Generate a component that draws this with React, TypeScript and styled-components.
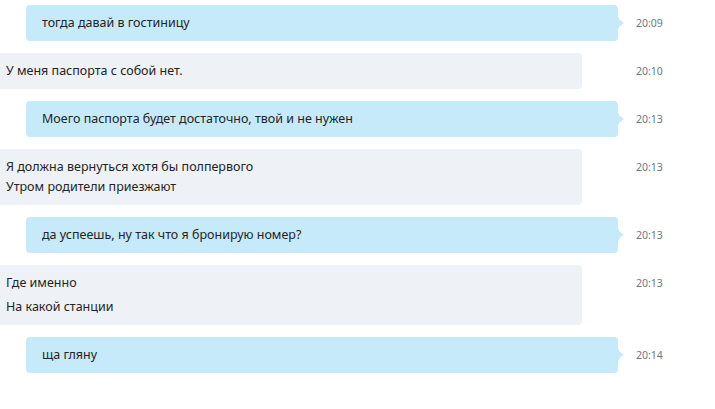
import React from "react";
import styled, { createGlobalStyle } from "styled-components";

const Global = createGlobalStyle`
  html, body { margin: 0; padding: 0; background: #ffffff; }
  body { font-family: "Noto Sans", "Open Sans", sans-serif; }
`;

const List = styled.div`
  display: flex;
  flex-direction: column;
  gap: 12px;
  padding-top: 5px;
  width: 715px;
`;

const Row = styled.div`
  display: grid;
  grid-template-columns: 636px auto;
  align-items: start;
`;

const Bubble = styled.div<{ $out?: boolean }>`
  position: relative;
  box-sizing: border-box;
  margin-left: ${(p) => (p.$out ? "26px" : "0")};
  margin-right: ${(p) => (p.$out ? "18px" : "54px")};
  padding: 8px ${(p) => (p.$out ? "16px" : "6px")};
  background: ${(p) => (p.$out ? "#c7eafb" : "#eef2f7")};
  border-radius: ${(p) => (p.$out ? "4px" : "0 4px 4px 0")};
  color: #242424;
  font-size: 12.5px;
  line-height: 20px;
  white-space: nowrap;
`;

const Para = styled.p`
  margin: 0;
  & + & { margin-top: 4px; }
`;

const Tail = styled.svg`
  position: absolute;
  right: -6px;
  top: 8px;
  width: 7px;
  height: 20px;
`;

const Time = styled.div`
  font-size: 10.5px;
  line-height: 20px;
  padding-top: 8px;
  color: #6b7785;
`;

type Msg = { out: boolean; time: string; paras: string[][] };

const messages: Msg[] = [
  { out: true, time: "20:09", paras: [["тогда давай в гостиницу"]] },
  { out: false, time: "20:10", paras: [["У меня паспорта с собой нет."]] },
  { out: true, time: "20:13", paras: [["Моего паспорта будет достаточно, твой и не нужен"]] },
  {
    out: false,
    time: "20:13",
    paras: [["Я должна вернуться хотя бы полпервого", "Утром родители приезжают"]],
  },
  { out: true, time: "20:13", paras: [["да успеешь, ну так что я бронирую номер?"]] },
  { out: false, time: "20:13", paras: [["Где именно"], ["На какой станции"]] },
  { out: true, time: "20:14", paras: [["ща гляну"]] },
];

export default function App() {
  return (
    <>
      <Global />
      <List>
        {messages.map((m, i) => (
          <Row key={i}>
            <Bubble $out={m.out}>
              {m.paras.map((lines, j) => (
                <Para key={j}>
                  {lines.map((l, k) => (
                    <React.Fragment key={k}>
                      {k > 0 && <br />}
                      {l}
                    </React.Fragment>
                  ))}
                </Para>
              ))}
              {m.out && (
                <Tail viewBox="0 0 7 20">
                  <path d="M0 0 Q1 7 7 10 Q1 13 0 20 Z" fill="#c7eafb" />
                </Tail>
              )}
            </Bubble>
            <Time>{m.time}</Time>
          </Row>
        ))}
      </List>
    </>
  );
}
